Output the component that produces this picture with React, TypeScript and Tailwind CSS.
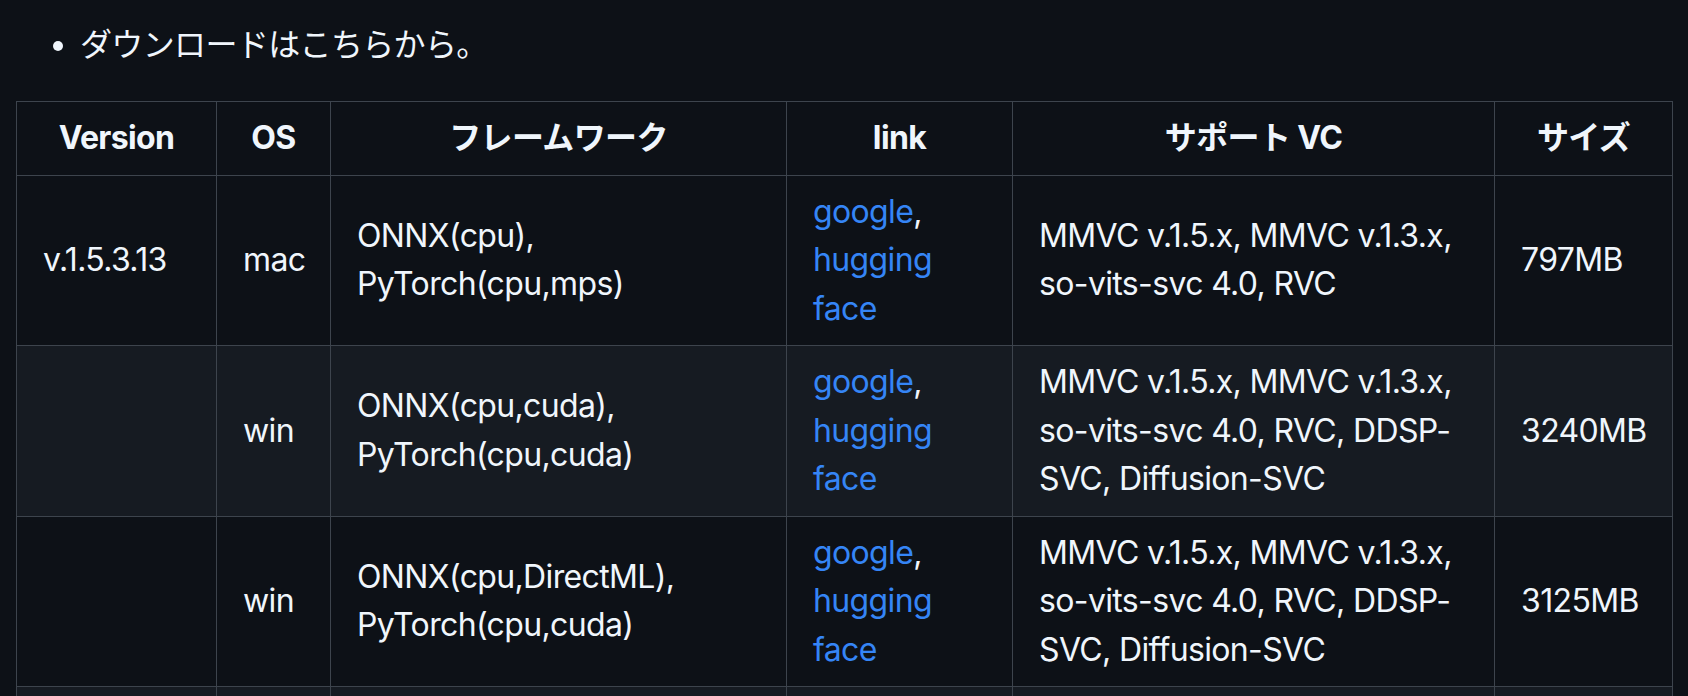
import React from "react";

const font = {
  fontFamily:
    'Inter, "Noto Sans CJK JP", "Noto Sans", sans-serif',
};

function Link({ children }: { children: React.ReactNode }) {
  return <a className="text-[#3585f6] no-underline">{children}</a>;
}

function Links() {
  return (
    <>
      <Link>google</Link>,<br />
      <Link>hugging</Link>
      <br />
      <Link>face</Link>
    </>
  );
}

const td = "border border-[#3d444d] px-[26px] py-[12px] align-middle whitespace-nowrap";
const th = "border border-[#3d444d] px-[26px] py-[12px] font-bold text-center whitespace-nowrap";

export default function App() {
  return (
    <div
      className="min-h-screen bg-[#0d1117] text-[#f0f6fc] text-[32px] leading-[48px] tracking-[-0.02em] pt-[21px] pl-[16px]"
      style={font}
    >
      <ul className="list-disc pl-[64px] marker:text-[#f0f6fc]">
        <li>ダウンロードはこちらから。</li>
      </ul>
      <table className="mt-[32px] border-collapse table-fixed w-[1656px] leading-[48.5px]">
        <colgroup>
          <col className="w-[200px]" />
          <col className="w-[114px]" />
          <col className="w-[456px]" />
          <col className="w-[226px]" />
          <col className="w-[482px]" />
          <col className="w-[178px]" />
        </colgroup>
        <thead>
          <tr className="bg-[#0d1117]">
            <th className={th}>Version</th>
            <th className={th}>OS</th>
            <th className={th}>フレームワーク</th>
            <th className={th}>link</th>
            <th className={th}>サポート VC</th>
            <th className={th}>サイズ</th>
          </tr>
        </thead>
        <tbody>
          <tr className="bg-[#0d1117]">
            <td className={td}>v.1.5.3.13</td>
            <td className={td}>mac</td>
            <td className={td}>
              ONNX(cpu),
              <br />
              PyTorch(cpu,mps)
            </td>
            <td className={td}>
              <Links />
            </td>
            <td className={td}>
              MMVC v.1.5.x, MMVC v.1.3.x,
              <br />
              so-vits-svc 4.0, RVC
            </td>
            <td className={td}>797MB</td>
          </tr>
          <tr className="bg-[#161b22]">
            <td className={td}></td>
            <td className={td}>win</td>
            <td className={td}>
              ONNX(cpu,cuda),
              <br />
              PyTorch(cpu,cuda)
            </td>
            <td className={td}>
              <Links />
            </td>
            <td className={td}>
              MMVC v.1.5.x, MMVC v.1.3.x,
              <br />
              so-vits-svc 4.0, RVC, DDSP-
              <br />
              SVC, Diffusion-SVC
            </td>
            <td className={td}>3240MB</td>
          </tr>
          <tr className="bg-[#0d1117]">
            <td className={td}></td>
            <td className={td}>win</td>
            <td className={td}>
              ONNX(cpu,DirectML),
              <br />
              PyTorch(cpu,cuda)
            </td>
            <td className={td}>
              <Links />
            </td>
            <td className={td}>
              MMVC v.1.5.x, MMVC v.1.3.x,
              <br />
              so-vits-svc 4.0, RVC, DDSP-
              <br />
              SVC, Diffusion-SVC
            </td>
            <td className={td}>3125MB</td>
          </tr>
          <tr className="bg-[#161b22]">
            <td className={`${td} h-[170px]`}></td>
            <td className={td}></td>
            <td className={td}></td>
            <td className={td}></td>
            <td className={td}></td>
            <td className={td}></td>
          </tr>
        </tbody>
      </table>
    </div>
  );
}
